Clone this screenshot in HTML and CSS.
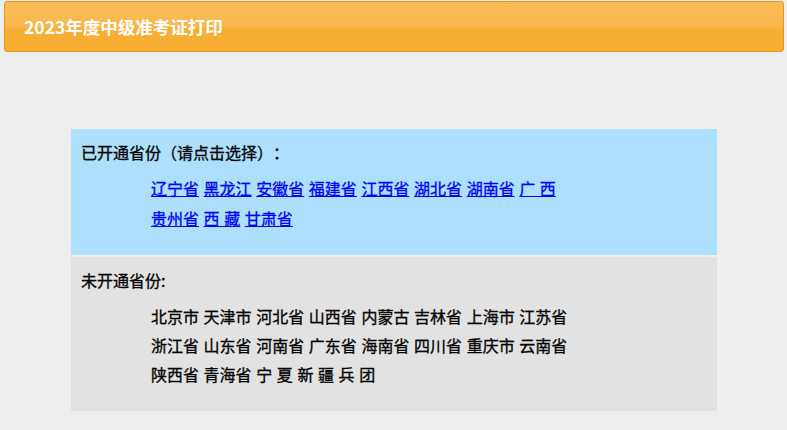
FILE: index.html
```html
<!DOCTYPE html>
<html lang="zh-CN">
<head>
<meta charset="utf-8">
<title>2023年度中级准考证打印</title>
<link rel="stylesheet" href="styles.css">
</head>
<body>
<div class="header">
  <h1 class="header-title">2023年度中级准考证打印</h1>
</div>
<div class="panel">
  <section class="section section-open">
    <div class="section-title">已开通省份（请点击选择）：</div>
    <div class="list list-links">
      <a href="#">辽宁省</a> <a href="#">黑龙江</a> <a href="#">安徽省</a> <a href="#">福建省</a> <a href="#">江西省</a> <a href="#">湖北省</a> <a href="#">湖南省</a> <a href="#">广&nbsp;西</a> <a href="#">贵州省</a> <a href="#">西&nbsp;藏</a> <a href="#">甘肃省</a>
    </div>
  </section>
  <section class="section section-closed">
    <div class="section-title">未开通省份:</div>
    <div class="list list-plain">
      <span>北京市</span> <span>天津市</span> <span>河北省</span> <span>山西省</span> <span>内蒙古</span> <span>吉林省</span> <span>上海市</span> <span>江苏省</span> <span>浙江省</span> <span>山东省</span> <span>河南省</span> <span>广东省</span> <span>海南省</span> <span>四川省</span> <span>重庆市</span> <span>云南省</span> <span>陕西省</span> <span>青海省</span> <span>宁 夏 新 疆 兵 团</span>
    </div>
  </section>
</div>
</body>
</html>
```

FILE: styles.css
```css
html, body {
  margin: 0;
  padding: 0;
  background: #eeeeee;
  font-family: "Noto Sans CJK SC", "Microsoft YaHei", sans-serif;
  color: #000;
}

.header {
  margin: 1px 3px 0 4px;
  height: 49px;
  border: 1px solid #e8961f;
  border-radius: 3px;
  background: linear-gradient(to bottom, #f9bd59 0%, #f8b84d 48%, #f6af35 56%, #f6ad31 100%);
  display: flex;
  align-items: center;
  padding-left: 19px;
}

.header-title {
  margin: 0;
  font-size: 17.5px;
  font-weight: bold;
  color: #fff;
  line-height: 22px;
}

.panel {
  margin: 77px 0 0 71px;
  width: 646px;
}

.section {
  padding: 12px 10px 0 10px;
  -webkit-text-stroke: 0.3px currentColor;
}

.section-open {
  background: #ade0fc;
  padding-bottom: 22px;
}

.section-closed {
  background: #e2e2e2;
  margin-top: 2px;
  padding-bottom: 22px;
}

.section-title {
  font-size: 16px;
  line-height: 22px;
  font-weight: normal;
  text-spacing-trim: space-all;
}

.list {
  margin-left: 70px;
  width: 440px;
  font-size: 16px;
  word-break: keep-all;
  word-spacing: 1px;
}

.list a,
.list span {
  white-space: nowrap;
}

.list-links {
  margin-top: 10px;
  line-height: 30px;
}

.list-links a {
  color: #0000ff;
  text-decoration: underline;
}

.list-plain {
  margin-top: 11px;
  line-height: 29px;
  color: #000;
}
```
